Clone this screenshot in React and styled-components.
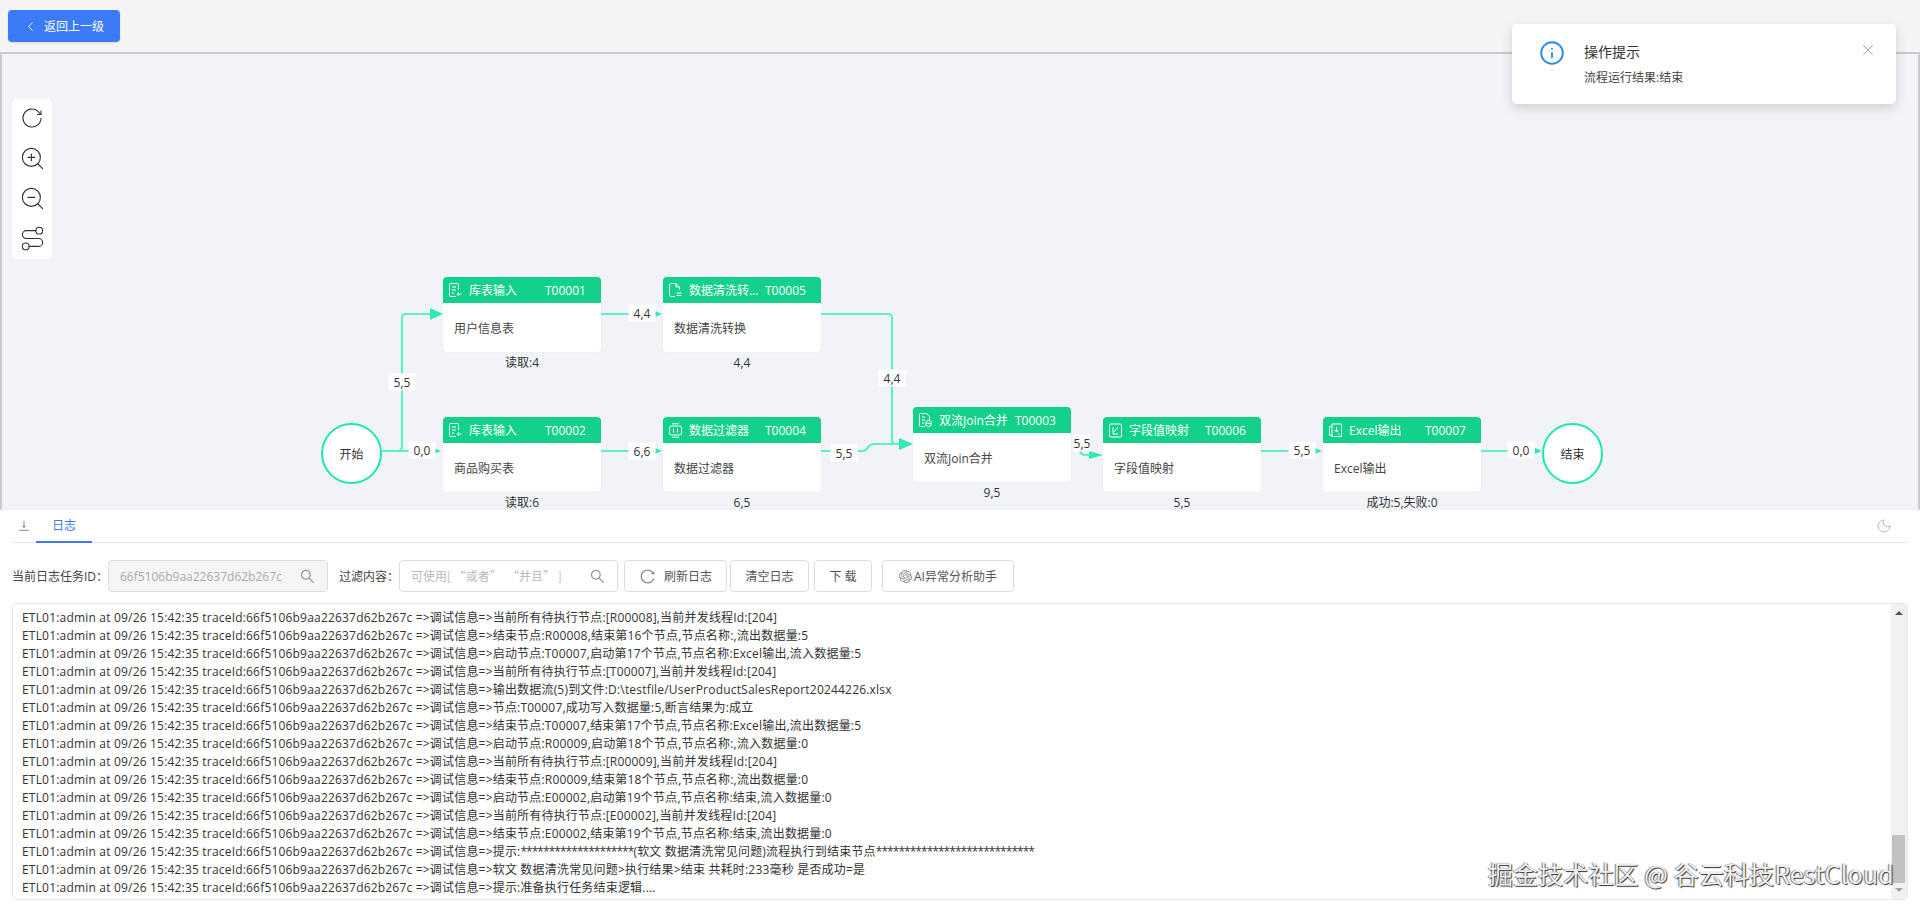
import styled, { createGlobalStyle } from "styled-components";
import { ChevronLeft, Info, X, Moon, ZoomIn, ZoomOut, Route } from "lucide-react";
import {
  AiOutlineReload,
  AiOutlineSearch,
  AiOutlineVerticalAlignBottom,
} from "react-icons/ai";
import { SiOpenai } from "react-icons/si";

const FONT = `"Open Sans", "Noto Sans CJK SC", sans-serif`;
const CJK_FONT = `"Noto Sans CJK SC", sans-serif`;
const TRACE = "ETL01:admin at 09/26 15:42:35 traceId:66f5106b9aa22637d62b267c =>调试信息=>";

const GlobalStyle = createGlobalStyle`
  html, body {
    margin: 0;
    padding: 0;
    background: #fff;
  }
  body {
    font-family: ${FONT};
    font-size: 12px;
    color: #333;
    overflow: hidden;
  }
  * {
    box-sizing: border-box;
  }
`;

const Page = styled.div`
  position: relative;
  width: 1920px;
  height: 911px;
  display: flex;
  flex-direction: column;
  overflow: hidden;
`;

const TopBar = styled.div`
  height: 52px;
  padding: 10px 8px;
  background: #f4f4f5;
`;

const BackButton = styled.button`
  display: flex;
  align-items: center;
  width: 112px;
  height: 32px;
  padding: 0 0 0 15px;
  gap: 6px;
  border: none;
  border-radius: 4px;
  background: #3b7cf6;
  color: #fff;
  font-family: ${FONT};
  font-size: 12px;
  box-shadow: 0 1px 2px rgba(0, 0, 0, 0.1);
`;

/* the flow editor: nodes and edges sit at their own coordinates */
const Canvas = styled.div`
  position: relative;
  height: 458px;
  background: #f1f3f8;
  box-shadow: inset 2px 2px 0 #c9c9ce, inset -2px 0 0 #c9c9ce;
  overflow: hidden;
`;

const Tools = styled.div`
  position: absolute;
  left: 12px;
  top: 47px;
  width: 40px;
  height: 160px;
  background: #fff;
  border-radius: 5px;
  color: #333;
`;

const ToolButton = styled.div`
  display: flex;
  align-items: center;
  justify-content: center;
  height: 40px;
  padding-bottom: 2px;
`;

const Edges = styled.svg`
  position: absolute;
  left: 0;
  top: 0;
`;

const Node = styled.div`
  position: absolute;
  left: ${(p) => p.$x}px;
  top: ${(p) => p.$y - 52}px;
  width: 158px;
`;

const Card = styled.div`
  height: 75px;
  background: #fff;
  border-radius: 4px;
  overflow: hidden;
  box-shadow: 0 0 2px rgba(0, 0, 0, 0.06);
`;

const NodeHead = styled.div`
  display: flex;
  align-items: center;
  height: 26px;
  padding-left: 6px;
  background: #13d18a;
  color: #fff;
  white-space: nowrap;
`;

const NodeTitle = styled.span`
  margin-left: 7px;
  width: 70px;
  margin-right: 6px;
  overflow: hidden;
  text-overflow: ellipsis;
`;

const NodeId = styled.span``;

const NodeBody = styled.div`
  padding: 16px 11px 0;
  color: #444;
`;

const Caption = styled.div`
  height: 22px;
  line-height: 22px;
  text-align: center;
  color: #333;
`;

const Circle = styled.div`
  position: absolute;
  left: ${(p) => p.$x}px;
  top: ${(p) => p.$y - 52}px;
  width: 61px;
  height: 61px;
  display: flex;
  align-items: center;
  justify-content: center;
  border: 2.5px solid #1ce8b0;
  border-radius: 50%;
  background: #fff;
  color: #333;
`;

const EdgeLabel = styled.div`
  position: absolute;
  left: ${(p) => p.$x}px;
  top: ${(p) => p.$y - 52}px;
  transform: translate(-50%, -50%);
  padding: 0 ${(p) => (p.$tight ? 0 : 5)}px;
  line-height: 17px;
  background: #fff;
  color: #333;
`;

const LogPanel = styled.div`
  flex: 1;
  display: flex;
  flex-direction: column;
  padding: 0 12px 11px;
  background: #fff;
`;

const Tabs = styled.div`
  display: flex;
  align-items: center;
  height: 33px;
  border-bottom: 1px solid #e6e6e6;
  color: #888;
`;

const TabIcon = styled.div`
  display: flex;
  width: 19px;
  margin-right: 5px;
  justify-content: flex-end;
`;

const Tab = styled.div`
  width: 56px;
  height: 33px;
  line-height: 32px;
  text-align: center;
  color: #3b7cf6;
  border-bottom: 2px solid #3b7cf6;
`;

const TabFill = styled.div`
  flex: 1;
`;

const MoonBox = styled.div`
  display: flex;
  margin-right: 16px;
  color: #999;
`;

const FormRow = styled.div`
  display: flex;
  align-items: center;
  height: 32px;
  margin-top: 17px;
  white-space: nowrap;
`;

const FieldLabel = styled.label`
  width: ${(p) => p.$w}px;
  margin-left: ${(p) => p.$ml || 0}px;
  color: #444;
`;

const SearchBox = styled.div`
  display: flex;
  align-items: center;
  width: ${(p) => p.$w}px;
  height: 32px;
  padding: 0 11px;
  border: 1px solid #dcdee2;
  border-radius: 4px;
  background: ${(p) => (p.$disabled ? "#f5f5f5" : "#fff")};
  color: #999;
`;

const SearchInput = styled.input`
  flex: 1;
  min-width: 0;
  border: none;
  outline: none;
  padding: 0;
  background: transparent;
  font-family: ${FONT};
  font-size: 12px;
  color: #aaa;
  &::placeholder {
    color: #bbb;
    font-family: ${CJK_FONT};
  }
`;

const ActionButton = styled.button`
  display: flex;
  align-items: center;
  justify-content: center;
  gap: ${(p) => p.$gap || 0}px;
  width: ${(p) => p.$w}px;
  height: 32px;
  margin-left: ${(p) => p.$ml}px;
  padding: 0;
  border: 1px solid #dcdee2;
  border-radius: 4px;
  background: #fff;
  color: #555;
  font-family: ${FONT};
  font-size: 12px;
`;

const LogBox = styled.div`
  display: flex;
  height: 297px;
  margin-top: 11px;
  border: 1px solid #e6e6e6;
  border-radius: 4px;
  overflow: hidden;
`;

const LogLines = styled.div`
  flex: 1;
  padding: 5px 9px;
  overflow: hidden;
`;

const LogLine = styled.div`
  height: 18px;
  line-height: 18px;
  white-space: nowrap;
  letter-spacing: 0.19px;
  color: #333;
`;

const Stars = styled.span`
  letter-spacing: -0.96px;
`;

const Scroll = styled.div`
  position: relative;
  width: 16px;
  background: #f1f1f1;
`;

const ScrollArrow = styled.div`
  position: absolute;
  left: 4px;
  ${(p) => (p.$down ? "bottom: 7px" : "top: 7px")};
  border-left: 4px solid transparent;
  border-right: 4px solid transparent;
  ${(p) =>
    p.$down ? "border-top: 4px solid #a3a3a3" : "border-bottom: 4px solid #505050"};
`;

const ScrollThumb = styled.div`
  position: absolute;
  left: 1px;
  right: 2px;
  top: 231px;
  height: 48px;
  background: #c1c1c1;
`;

const Toast = styled.div`
  position: absolute;
  left: 1512px;
  top: 24px;
  width: 384px;
  height: 80px;
  display: flex;
  padding: 16px 0 0 27px;
  background: #fff;
  border-radius: 5px;
  box-shadow: 0 4px 12px rgba(0, 0, 0, 0.15);
`;

const ToastIcon = styled.div`
  display: flex;
  height: 26px;
  color: #2d8cf0;
`;

const ToastText = styled.div`
  margin-left: 19px;
`;

const ToastTitle = styled.div`
  font-size: 14px;
  line-height: 24px;
  color: #333;
`;

const ToastDesc = styled.div`
  margin-top: 4px;
  line-height: 20px;
  color: #444;
`;

const ToastClose = styled.div`
  position: absolute;
  right: 19px;
  top: 17px;
  display: flex;
  color: #888;
`;

const Watermark = styled.div`
  position: absolute;
  left: 1488px;
  top: 855px;
  font-family: ${CJK_FONT};
  font-size: 25px;
  letter-spacing: 0.1px;
  line-height: 36px;
  color: #eee;
  text-shadow: 1px 1px 1px #333, -1px 0 1px #777;
  white-space: nowrap;
`;

function HeadIcon({ children }) {
  return (
    <svg width="13" height="15" viewBox="0 0 13 15" fill="none" stroke="#fff" strokeWidth="1">
      {children}
    </svg>
  );
}

const TableInIcon = () => (
  <HeadIcon>
    <path d="M7 13.5H1.5a1 1 0 0 1-1-1v-11a1 1 0 0 1 1-1h7a1 1 0 0 1 1 1V7" />
    <path d="M3 4h4M3 7h4M3 10h2M12.5 11H8M10 9l-2 2 2 2" />
  </HeadIcon>
);

const CleanIcon = () => (
  <HeadIcon>
    <path d="M6 13.5H2a1.5 1.5 0 0 1-1.5-1.5V2A1.5 1.5 0 0 1 2 .5h5l3.5 3.5v3" />
    <path d="M7 .5V4h3.5M7.5 10h5M7.5 12.5h5" />
  </HeadIcon>
);

const FilterIcon = () => (
  <HeadIcon>
    <rect x=".5" y="3" width="12" height="9" rx="2" />
    <path d="M3 .8h7M3 14.2h7M4.5 5.5v4M8.5 5.5v4" />
  </HeadIcon>
);

const JoinIcon = () => (
  <HeadIcon>
    <path d="M6 13.5H1.5a1 1 0 0 1-1-1v-11a1 1 0 0 1 1-1h6l3 3V7" />
    <path d="M3 4h3M3 7h3M3 10h2" />
    <circle cx="9.5" cy="10.5" r="3" />
    <path d="M7 10.5h5" />
  </HeadIcon>
);

const MapIcon = () => (
  <HeadIcon>
    <rect x=".5" y="1" width="12" height="13" rx="1.5" />
    <path d="M4 4v7h5M9 4 5 9" />
  </HeadIcon>
);

const ExcelIcon = () => (
  <HeadIcon>
    <path d="M3 3.5H.5V12L3 13M3 1h9.5v12.5H3z" />
    <path d="M7.5 4v5M5.5 7l2 2 2-2M9 11h1.5" />
  </HeadIcon>
);

const NODES = [
  { x: 443, y: 277, icon: <TableInIcon />, title: "库表输入", id: "T00001", body: "用户信息表", caption: "读取:4" },
  { x: 663, y: 277, icon: <CleanIcon />, title: "数据清洗转换", id: "T00005", body: "数据清洗转换", caption: "4,4" },
  { x: 443, y: 417, icon: <TableInIcon />, title: "库表输入", id: "T00002", body: "商品购买表", caption: "读取:6" },
  { x: 663, y: 417, icon: <FilterIcon />, title: "数据过滤器", id: "T00004", body: "数据过滤器", caption: "6,5" },
  { x: 913, y: 407, icon: <JoinIcon />, title: "双流Join合并", id: "T00003", body: "双流Join合并", caption: "9,5" },
  { x: 1103, y: 417, icon: <MapIcon />, title: "字段值映射", id: "T00006", body: "字段值映射", caption: "5,5" },
  { x: 1323, y: 417, icon: <ExcelIcon />, title: "Excel输出", id: "T00007", body: "Excel输出", caption: "成功:5,失败:0" },
];

const EDGE_PATHS = [
  "M382 451H398Q402 451 402 447V318Q402 314 406 314H432",
  "M382 451H436",
  "M601 314H656",
  "M601 451H656",
  "M821 314H888Q892 314 892 318V440Q892 444 896 444H900",
  "M821 451H862C870 451 866 444 874 444H900",
  "M1080 450Q1080 455 1086 455H1090",
  "M1261 451H1316",
  "M1481 451H1536",
];

const ARROWS = [
  "430,308 443,314 430,320",
  "434,448 441,451 434,454",
  "655,311 662,314 655,317",
  "655,448 662,451 655,454",
  "899,438 913,444 899,450",
  "1089,451 1103,455 1089,459",
  "1315,448 1322,451 1315,454",
  "1535,448 1542,451 1535,454",
];

const LABELS = [
  { x: 402, y: 382, text: "5,5" },
  { x: 422, y: 450, text: "0,0" },
  { x: 642, y: 313, text: "4,4" },
  { x: 642, y: 451, text: "6,6" },
  { x: 892, y: 378, text: "4,4" },
  { x: 844, y: 453, text: "5,5" },
  { x: 1082, y: 443, text: "5,5", tight: true },
  { x: 1302, y: 450, text: "5,5" },
  { x: 1521, y: 450, text: "0,0" },
];

const LOGS = [
  "当前所有待执行节点:[R00008],当前并发线程Id:[204]",
  "结束节点:R00008,结束第16个节点,节点名称:,流出数据量:5",
  "启动节点:T00007,启动第17个节点,节点名称:Excel输出,流入数据量:5",
  "当前所有待执行节点:[T00007],当前并发线程Id:[204]",
  "输出数据流(5)到文件:D:\\testfile/UserProductSalesReport20244226.xlsx",
  "节点:T00007,成功写入数据量:5,断言结果为:成立",
  "结束节点:T00007,结束第17个节点,节点名称:Excel输出,流出数据量:5",
  "启动节点:R00009,启动第18个节点,节点名称:,流入数据量:0",
  "当前所有待执行节点:[R00009],当前并发线程Id:[204]",
  "结束节点:R00009,结束第18个节点,节点名称:,流出数据量:0",
  "启动节点:E00002,启动第19个节点,节点名称:结束,流入数据量:0",
  "当前所有待执行节点:[E00002],当前并发线程Id:[204]",
  "结束节点:E00002,结束第19个节点,节点名称:结束,流出数据量:0",
  <>
    提示:<Stars>********************</Stars>(软文 数据清洗常见问题)流程执行到结束节点
    <Stars>****************************</Stars>
  </>,
  "软文 数据清洗常见问题>执行结果>结束 共耗时:233毫秒 是否成功=是",
  "提示:准备执行任务结束逻辑....",
];

function RefreshIcon() {
  return (
    <svg width="22" height="22" viewBox="0 0 22 22" fill="none" stroke="currentColor" strokeWidth="1.1">
      <path d="M20 11a9 9 0 1 1-3-6.7L19.5 7" />
      <path d="M20 3.5V7.5H16" />
    </svg>
  );
}

export default function App() {
  return (
    <Page>
      <GlobalStyle />
      <TopBar>
        <BackButton>
          <ChevronLeft size={15} strokeWidth={1.5} />
          返回上一级
        </BackButton>
      </TopBar>

      <Canvas>
        <Tools>
          <ToolButton><RefreshIcon /></ToolButton>
          <ToolButton><ZoomIn size={27} strokeWidth={1} /></ToolButton>
          <ToolButton><ZoomOut size={27} strokeWidth={1} /></ToolButton>
          <ToolButton><Route size={27} strokeWidth={1} /></ToolButton>
        </Tools>

        <Edges width="1920" height="458" viewBox="0 52 1920 458" fill="none">
          {EDGE_PATHS.map((d) => (
            <path key={d} d={d} stroke="#5ef0c6" strokeWidth="2.2" />
          ))}
          {ARROWS.map((pts) => (
            <polygon key={pts} points={pts} fill="#2eeab5" />
          ))}
        </Edges>

        <Circle $x={321} $y={423}>开始</Circle>
        <Circle $x={1542} $y={423}>结束</Circle>

        {NODES.map((n) => (
          <Node key={n.id} $x={n.x} $y={n.y}>
            <Card>
              <NodeHead>
                {n.icon}
                <NodeTitle>{n.title}</NodeTitle>
                <NodeId>{n.id}</NodeId>
              </NodeHead>
              <NodeBody>{n.body}</NodeBody>
            </Card>
            <Caption>{n.caption}</Caption>
          </Node>
        ))}

        {LABELS.map((l) => (
          <EdgeLabel key={`${l.x}-${l.y}`} $x={l.x} $y={l.y} $tight={l.tight}>
            {l.text}
          </EdgeLabel>
        ))}
      </Canvas>

      <LogPanel>
        <Tabs>
          <TabIcon>
            <AiOutlineVerticalAlignBottom size={14} />
          </TabIcon>
          <Tab>日志</Tab>
          <TabFill />
          <MoonBox>
            <Moon size={16} strokeWidth={1} />
          </MoonBox>
        </Tabs>

        <FormRow>
          <FieldLabel $w={96}>当前日志任务ID：</FieldLabel>
          <SearchBox $w={220} $disabled>
            <SearchInput disabled value="66f5106b9aa22637d62b267c" readOnly />
            <AiOutlineSearch size={17} />
          </SearchBox>
          <FieldLabel $w={60} $ml={11}>过滤内容：</FieldLabel>
          <SearchBox $w={219}>
            <SearchInput placeholder="可使用[ “或者”  “并且” ]" />
            <AiOutlineSearch size={17} />
          </SearchBox>
          <ActionButton $w={103} $ml={6} $gap={8}>
            <AiOutlineReload size={17} color="#888" />
            刷新日志
          </ActionButton>
          <ActionButton $w={79} $ml={3}>清空日志</ActionButton>
          <ActionButton $w={58} $ml={5}>下 载</ActionButton>
          <ActionButton $w={132} $ml={10} $gap={2}>
            <SiOpenai size={13} color="#888" />
            AI异常分析助手
          </ActionButton>
        </FormRow>

        <LogBox>
          <LogLines>
            {LOGS.map((line, i) => (
              <LogLine key={i}>
                {TRACE}
                {line}
              </LogLine>
            ))}
          </LogLines>
          <Scroll>
            <ScrollArrow />
            <ScrollThumb />
            <ScrollArrow $down />
          </Scroll>
        </LogBox>
      </LogPanel>

      <Toast>
        <ToastIcon>
          <Info size={26} strokeWidth={1.8} />
        </ToastIcon>
        <ToastText>
          <ToastTitle>操作提示</ToastTitle>
          <ToastDesc>流程运行结果:结束</ToastDesc>
        </ToastText>
        <ToastClose>
          <X size={18} strokeWidth={1} />
        </ToastClose>
      </Toast>

      <Watermark>掘金技术社区 @ 谷云科技RestCloud</Watermark>
    </Page>
  );
}
